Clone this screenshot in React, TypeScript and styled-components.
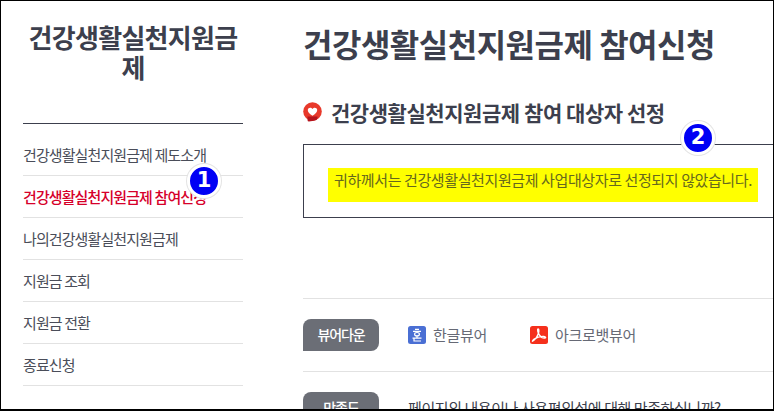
import React from "react";
import styled, { createGlobalStyle } from "styled-components";

const Global = createGlobalStyle`
  html, body { margin: 0; padding: 0; background: #fff; }
  body { font-family: "Noto Sans CJK KR", "Noto Sans", sans-serif; color: #3c3f4d; overflow: hidden; }
  * { box-sizing: border-box; }
`;

const Frame = styled.div`
  position: relative;
  width: 774px;
  height: 411px;
  border: 1px solid #000;
  border-bottom-width: 2px;
  overflow: hidden;
  display: grid;
  grid-template-columns: 302px 1fr;
  background: #fff;
`;

const Sidebar = styled.aside`
  padding: 21px 0 0 22px;
  width: 242px;
`;

const SideTitle = styled.h2`
  margin: 0;
  padding-bottom: 41px;
  font-size: 26px;
  line-height: 30px;
  font-weight: 700;
  letter-spacing: -0.7px;
  text-align: center;
  border-bottom: 1px solid #3c3f4d;
`;

const Menu = styled.ul`
  list-style: none;
  margin: 10px 0 0;
  padding: 0;
`;

const MenuItem = styled.li<{ $active?: boolean }>`
  height: 42px;
  line-height: 41px;
  font-size: 15px;
  letter-spacing: -0.9px;
  white-space: nowrap;
  border-bottom: 1px solid #e2e2e2;
  color: ${(p) => (p.$active ? "#d6002a" : "#4a4d59")};
  font-weight: ${(p) => (p.$active ? 500 : 400)};
`;

const Main = styled.main`
  min-width: 0;
  padding-top: 20px;
`;

const PageTitle = styled.h1`
  margin: 0;
  font-size: 32px;
  line-height: 44px;
  font-weight: 700;
  letter-spacing: -0.5px;
  white-space: nowrap;
`;

const SectionTitle = styled.h3`
  margin: 32px 0 0;
  display: flex;
  align-items: center;
  gap: 9px;
  font-size: 21px;
  line-height: 30px;
  font-weight: 700;
  letter-spacing: -0.45px;
  white-space: nowrap;
`;

const NoticeBox = styled.div`
  margin-top: 17px;
  width: 480px;
  height: 74px;
  border: 1px solid #3c3f4d;
  border-right: 0;
  padding: 23px 0 0 24px;
`;

const Highlight = styled.p`
  margin: 0;
  width: 430px;
  height: 34px;
  padding-left: 6px;
  background: #ffff00;
  color: #66681e;
  font-size: 15px;
  line-height: 24px;
  letter-spacing: -0.39px;
  white-space: nowrap;
`;

const Row = styled.div<{ $offset: number; $height: number }>`
  margin-top: ${(p) => p.$offset}px;
  height: ${(p) => p.$height}px;
  border-top: 1px solid #e2e2e2;
  padding-top: 20px;
  display: flex;
  align-items: flex-start;
`;

const Tag = styled.span`
  flex: none;
  width: 76px;
  height: 32px;
  border-radius: 8px 8px 8px 0;
  background: #6b6e76;
  color: #fff;
  font-size: 14px;
  font-weight: 500;
  line-height: 31px;
  text-align: center;
  letter-spacing: -1.1px;
`;

const Viewers = styled.div`
  display: flex;
  margin-left: 29px;
  gap: 43px;
  padding-top: 7px;
`;

const Viewer = styled.span`
  display: flex;
  align-items: center;
  gap: 7px;
  color: #666975;
  font-size: 15px;
  line-height: 16px;
  height: 18px;
  letter-spacing: -0.3px;
  white-space: nowrap;
`;

const Question = styled.p`
  margin: 0 0 0 29px;
  padding-top: 7px;
  font-size: 15px;
  line-height: 18px;
  color: #3c3f4d;
  letter-spacing: -0.42px;
  white-space: nowrap;
`;

const Badge = styled.span<{ $x: number; $y: number }>`
  position: absolute;
  left: ${(p) => p.$x}px;
  top: ${(p) => p.$y}px;
  width: 34px;
  height: 34px;
  border-radius: 50%;
  background: #0000f5;
  border: 3px solid #fff;
  box-shadow: 0 0 0 1px #e4e4e4;
  color: #fff;
  font-family: "DejaVu Sans", sans-serif;
  font-weight: 700;
  font-size: 21px;
  line-height: 27px;
  text-align: center;
`;

const HeartIcon = () => (
  <svg width="19" height="21" viewBox="0 0 19 21" aria-hidden="true">
    <circle cx="9.5" cy="9.5" r="9.3" fill="#e8392b" />
    <path d="M9.5 13.8 C6.2 11.8 4.6 9.8 4.8 7.8 C5 5.4 8.2 4.8 9.5 7 C10.8 4.8 14 5.4 14.2 7.8 C14.4 9.8 12.8 11.8 9.5 13.8Z" fill="#fff" />
    <path d="M4.5 14.6 H14.5 V16.5 Q14 18.6 11 18.8 L6 19.6 Q4.5 19.6 4.5 18Z" fill="#b5141c" />
  </svg>
);

const HwpIcon = () => (
  <svg width="18" height="18" viewBox="0 0 18 18" aria-hidden="true">
    <rect width="18" height="18" rx="2.5" fill="#4a6fd4" />
    <path d="M7 3.4h4M5 5.4h8" stroke="#fff" strokeWidth="1.2" fill="none" />
    <ellipse cx="9" cy="8.2" rx="2.4" ry="1.7" stroke="#fff" strokeWidth="1.2" fill="none" />
    <path d="M9 10v2M4.5 12.2h9M6 12.6v2.4h7" stroke="#fff" strokeWidth="1.2" fill="none" />
  </svg>
);

const PdfIcon = () => (
  <svg width="18" height="18" viewBox="0 0 18 18" aria-hidden="true">
    <rect width="18" height="18" rx="2.5" fill="#f5301c" />
    <path
      d="M2.6 15.2 C4.8 14 7.4 10.6 8.6 6.6 C9.1 4.8 8.8 2.8 8 3 C7.2 3.3 7.7 6.2 9.3 8.8 C10.7 11 13 12.2 14.8 12 C16.2 11.8 15.7 10.6 13.9 10.4 C10.9 10.2 6.8 11.2 4.2 13.1 C3 14 2 15.5 2.6 15.2Z"
      fill="none"
      stroke="#fff"
      strokeWidth="1.4"
    />
  </svg>
);

const menu = [
  "건강생활실천지원금제 제도소개",
  "건강생활실천지원금제 참여신청",
  "나의건강생활실천지원금제",
  "지원금 조회",
  "지원금 전환",
  "종료신청",
];

export default function App() {
  return (
    <Frame>
      <Global />
      <Sidebar>
        <SideTitle>건강생활실천지원금제</SideTitle>
        <Menu>
          {menu.map((m, i) => (
            <MenuItem key={m} $active={i === 1}>{m}</MenuItem>
          ))}
        </Menu>
      </Sidebar>
      <Main>
        <PageTitle>건강생활실천지원금제 참여신청</PageTitle>
        <SectionTitle>
          <HeartIcon />
          건강생활실천지원금제 참여 대상자 선정
        </SectionTitle>
        <NoticeBox>
          <Highlight>귀하께서는 건강생활실천지원금제 사업대상자로 선정되지 않았습니다.</Highlight>
        </NoticeBox>
        <Row $offset={80} $height={73}>
          <Tag>뷰어다운</Tag>
          <Viewers>
            <Viewer><HwpIcon />한글뷰어</Viewer>
            <Viewer><PdfIcon />아크로뱃뷰어</Viewer>
          </Viewers>
        </Row>
        <Row $offset={0} $height={60}>
          <Tag>만족도</Tag>
          <Question>페이지의 내용이나 사용편의성에 대해 만족하십니까?</Question>
        </Row>
      </Main>
      <Badge $x={186} $y={163}>1</Badge>
      <Badge $x={680} $y={120}>2</Badge>
    </Frame>
  );
}
